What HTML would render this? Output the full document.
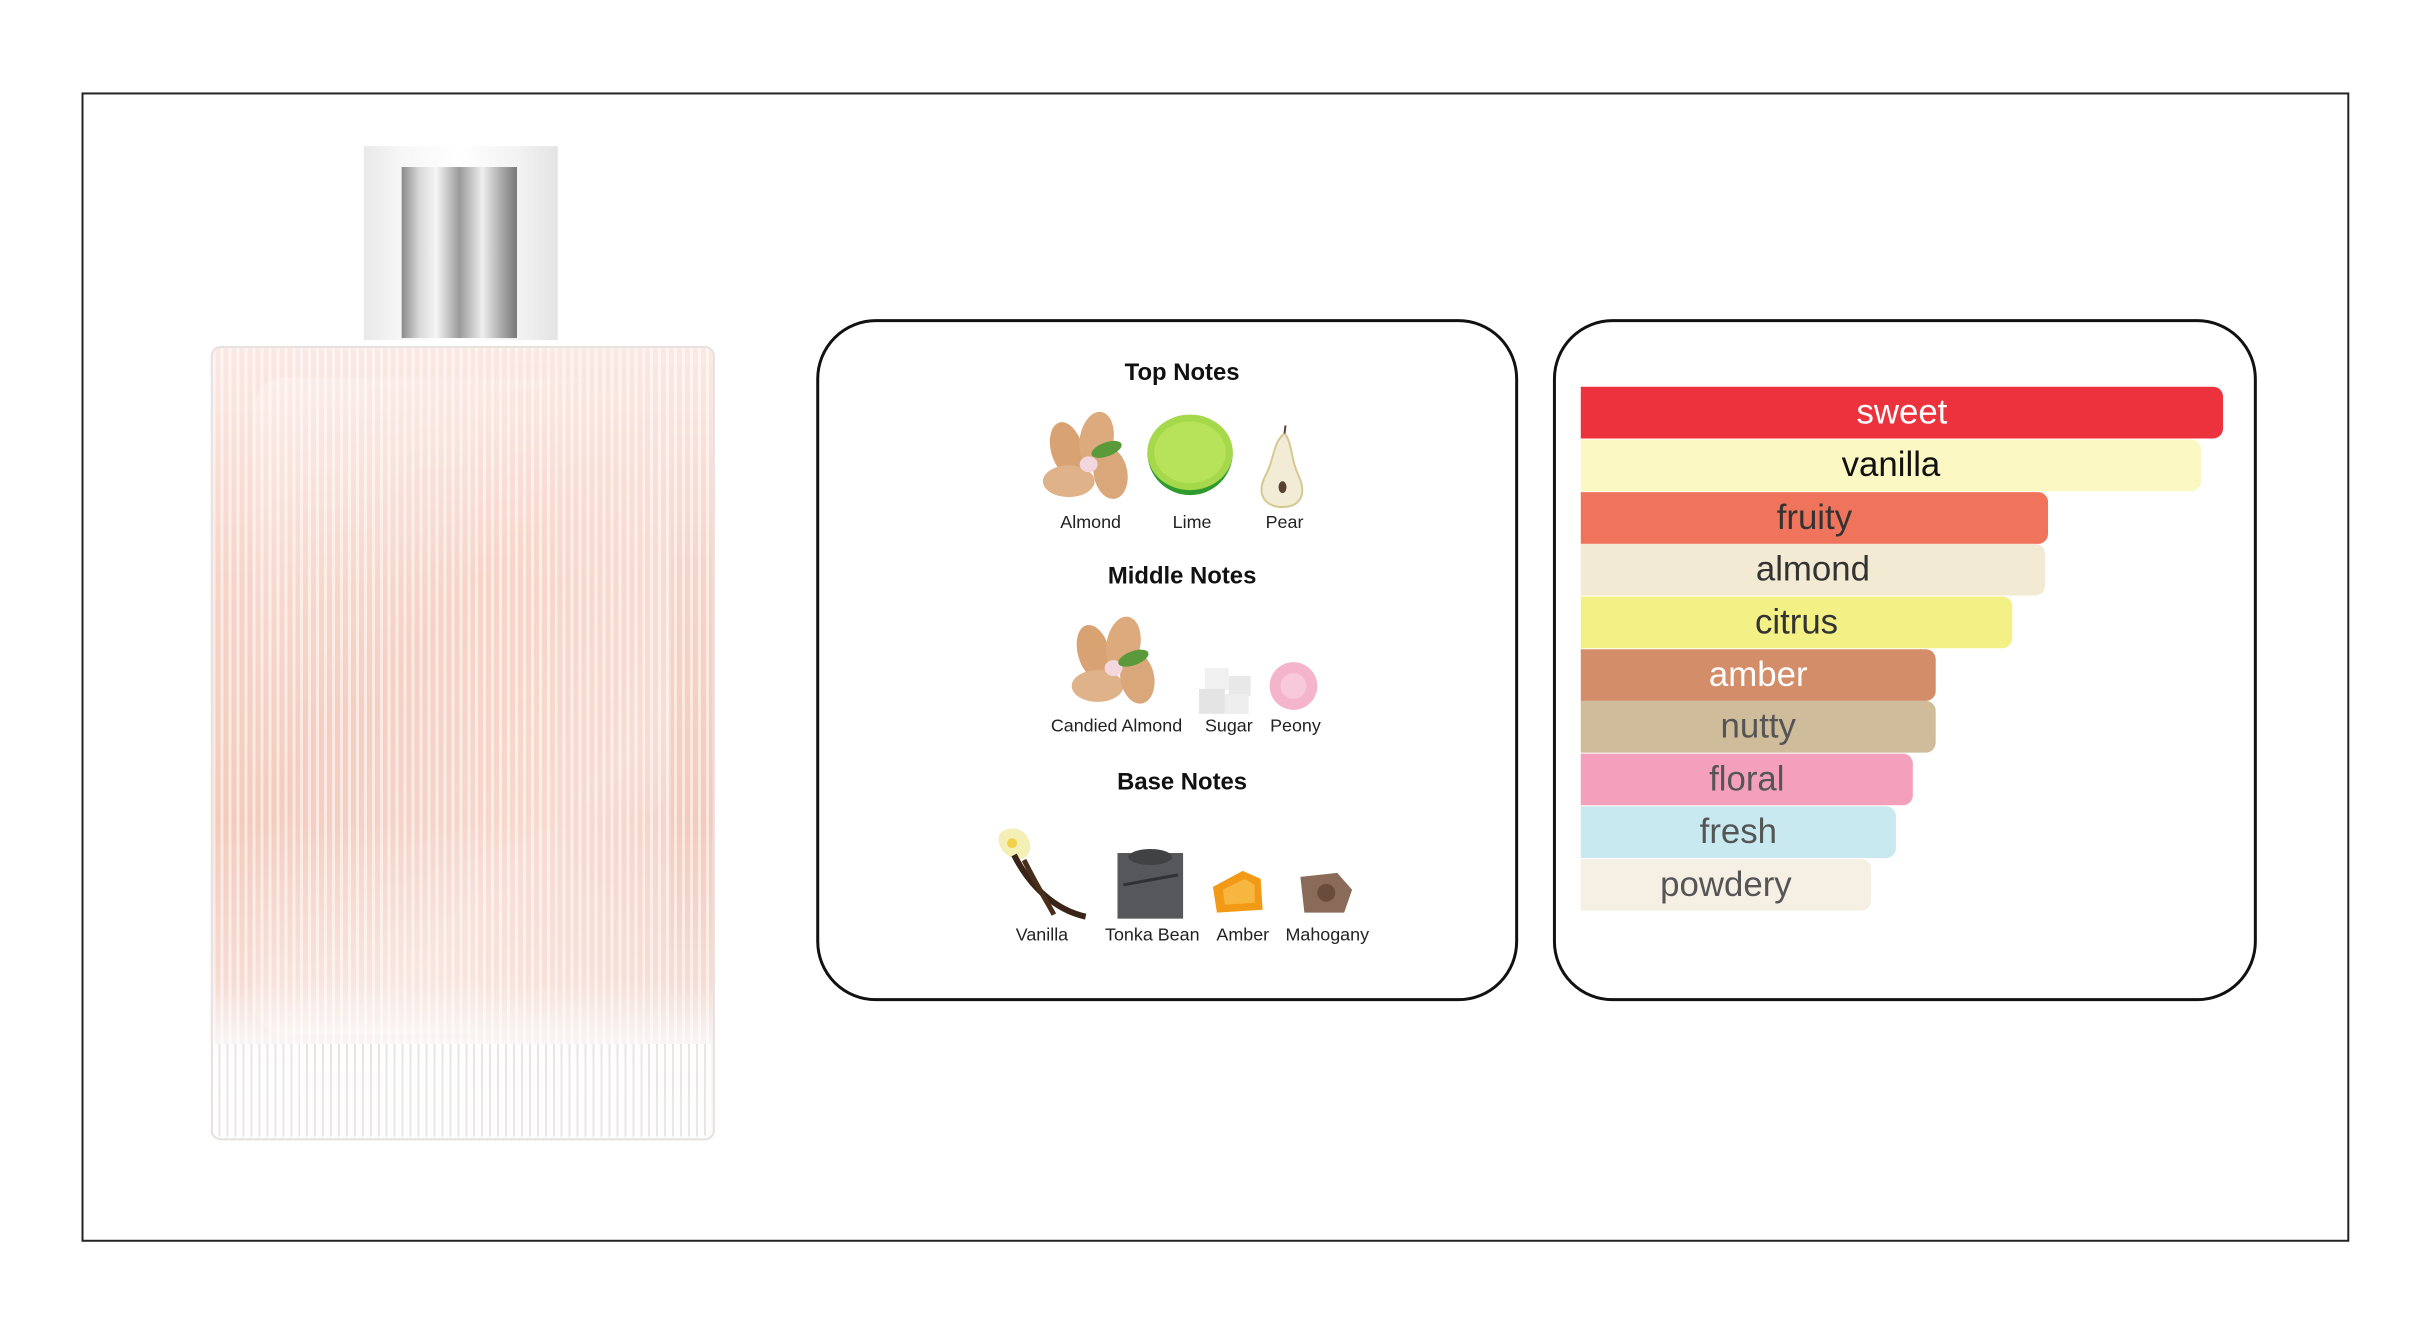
<!DOCTYPE html>
<html><head><meta charset="utf-8"><style>
html,body{margin:0;padding:0;background:#fff;}
body{width:2410px;height:1323px;position:relative;overflow:hidden;font-family:"Liberation Sans",sans-serif;}
#w{position:absolute;left:0;top:0;width:2410px;height:1323px;transform:scale(0.9942);transform-origin:0 0;}
.abs{position:absolute;}
.frame{left:82px;top:93px;width:2277px;height:1152px;border:2px solid #222;}
.panel{border:3px solid #111;border-radius:60px;background:#fff;}
.h{position:absolute;width:706px;text-align:center;font-weight:bold;font-size:24px;color:#111;left:15px;}
.lbl{position:absolute;font-size:18px;color:#222;transform:translateX(-50%);white-space:nowrap;}
.bar{position:absolute;left:1590px;height:52px;border-radius:0 10px 10px 0;text-align:center;font-size:35px;line-height:52px;}
</style></head><body><div id="w">
<div class="abs frame"></div>

<div class="abs" style="left:366px;top:147px;width:195px;height:195px;background:linear-gradient(90deg,#e9e9e9,#f7f7f7 20%,#fff 50%,#f2f2f2 80%,#e4e4e4);"></div>
<div class="abs" style="left:404px;top:168px;width:116px;height:172px;background:linear-gradient(90deg,#8a8a8a,#d8d8d8 15%,#f5f5f5 30%,#9a9a9a 50%,#eee 70%,#b0b0b0 85%,#777);"></div>
<div class="abs" style="left:212px;top:348px;width:503px;height:795px;border:2px solid #e6e0de;border-radius:10px;background:repeating-linear-gradient(90deg,rgba(255,255,255,0.55) 0 3px,rgba(255,255,255,0) 3px 8px),linear-gradient(180deg,#fbe9e4 0%,#f6d4c8 30%,#f3cbbd 60%,#f6dcd3 80%,#f8f5f4 88%,#fafafa 100%);"></div>
<div class="abs" style="left:255px;top:380px;width:420px;height:660px;border-radius:30px;background:linear-gradient(135deg,rgba(255,255,255,0.25),rgba(255,255,255,0) 40%,rgba(255,255,255,0.3) 70%,rgba(255,255,255,0));"></div>
<div class="abs" style="left:212px;top:1050px;width:503px;height:93px;background:repeating-linear-gradient(90deg,rgba(230,225,225,0.8) 0 2px,rgba(255,255,255,0.9) 2px 8px);border-radius:0 0 10px 10px;"></div>

<div class="abs panel" style="left:821px;top:321px;width:700px;height:680px;"></div>
<div class="abs" style="left:821px;top:0;width:706px;height:1323px;">
  <div class="h" style="top:361px;">Top Notes</div>
  <div class="h" style="top:566px;">Middle Notes</div>
  <div class="h" style="top:773px;">Base Notes</div>
</div>
<svg class="abs" style="left:0;top:0" width="2410" height="1323">
  <g transform="translate(1095,462)">
    <ellipse cx="-22" cy="-10" rx="16" ry="28" fill="#d8a273" transform="rotate(-15 -22 -10)"/>
    <ellipse cx="8" cy="-20" rx="17" ry="28" fill="#dcaa7c" transform="rotate(10 8 -20)"/>
    <ellipse cx="-20" cy="22" rx="26" ry="16" fill="#e0b28a"/>
    <ellipse cx="22" cy="14" rx="17" ry="26" fill="#d9a77a" transform="rotate(-10 22 14)"/>
    <ellipse cx="0" cy="5" rx="9" ry="8" fill="#f3d7df"/>
    <ellipse cx="18" cy="-10" rx="16" ry="7" fill="#5a9a3a" transform="rotate(-20 18 -10)"/>
  </g>
  <path d="M1154,455 A43,43 0 0 0 1240,455 Z" fill="#2f9a2e"/>
  <ellipse cx="1197" cy="455" rx="43" ry="38" fill="#a5d84a"/>
  <ellipse cx="1197" cy="455" rx="36" ry="31" fill="#b7e35a"/>
  <path d="M1292,436 C1280,445 1282,462 1273,478 C1262,500 1275,510 1290,510 C1305,510 1316,500 1306,478 C1298,462 1300,445 1292,436 Z" fill="#f2ecd6" stroke="#d5c890" stroke-width="2"/>
  <line x1="1292" y1="436" x2="1293" y2="428" stroke="#5a4030" stroke-width="2"/>
  <ellipse cx="1290" cy="490" rx="4" ry="6" fill="#5a4030"/>
  <g transform="translate(1122,668)">
    <ellipse cx="-22" cy="-12" rx="16" ry="28" fill="#d8a273" transform="rotate(-15 -22 -12)"/>
    <ellipse cx="8" cy="-20" rx="17" ry="28" fill="#dcaa7c" transform="rotate(10 8 -20)"/>
    <ellipse cx="-18" cy="22" rx="26" ry="16" fill="#e0b28a"/>
    <ellipse cx="22" cy="14" rx="17" ry="26" fill="#d9a77a" transform="rotate(-10 22 14)"/>
    <ellipse cx="-2" cy="4" rx="9" ry="8" fill="#f3d7df"/>
    <ellipse cx="18" cy="-6" rx="16" ry="7" fill="#5a9a3a" transform="rotate(-20 18 -6)"/>
  </g>
  <rect x="1212" y="672" width="24" height="22" fill="#f0f0f0"/>
  <rect x="1236" y="680" width="22" height="20" fill="#e8e8e8"/>
  <rect x="1206" y="693" width="26" height="25" fill="#e4e4e4"/>
  <rect x="1232" y="698" width="24" height="20" fill="#eeeeee"/>
  <circle cx="1301" cy="690" r="24" fill="#f4b5cc"/>
  <circle cx="1301" cy="690" r="13" fill="#f7c9da"/>
  <path d="M1006,838 C1016,830 1030,832 1035,845 C1040,858 1030,866 1022,864 C1012,862 1000,850 1006,838 Z" fill="#f3efb5"/>
  <circle cx="1018" cy="848" r="5" fill="#f2d24a"/>
  <path d="M1020,860 C1035,890 1060,915 1092,922" stroke="#3a2418" stroke-width="6" fill="none"/>
  <path d="M1030,865 C1045,895 1055,910 1060,920" stroke="#4a2e1c" stroke-width="5" fill="none"/>
  <rect x="1124" y="858" width="66" height="66" fill="#55575a"/>
  <ellipse cx="1157" cy="862" rx="22" ry="8" fill="#404244"/>
  <line x1="1130" y1="890" x2="1185" y2="880" stroke="#2f3133" stroke-width="3"/>
  <path d="M1220,892 L1250,876 L1268,884 L1270,915 L1224,918 Z" fill="#f29a16"/>
  <path d="M1230,895 L1252,884 L1262,890 L1262,908 L1232,910 Z" fill="#f7b640"/>
  <path d="M1308,882 L1345,878 L1360,895 L1352,918 L1312,918 Z" fill="#8a6a58"/>
  <circle cx="1334" cy="898" r="9" fill="#6a4c3c"/>
</svg>
<div class="abs" style="left:0;top:0;">
  <div class="lbl" style="left:1097px;top:515px;">Almond</div>
  <div class="lbl" style="left:1199px;top:515px;">Lime</div>
  <div class="lbl" style="left:1292px;top:515px;">Pear</div>
  <div class="lbl" style="left:1123px;top:720px;">Candied Almond</div>
  <div class="lbl" style="left:1236px;top:720px;">Sugar</div>
  <div class="lbl" style="left:1303px;top:720px;">Peony</div>
  <div class="lbl" style="left:1048px;top:930px;">Vanilla</div>
  <div class="lbl" style="left:1159px;top:930px;">Tonka Bean</div>
  <div class="lbl" style="left:1250px;top:930px;">Amber</div>
  <div class="lbl" style="left:1335px;top:930px;">Mahogany</div>
</div>

<div class="abs panel" style="left:1562px;top:321px;width:702px;height:680px;"></div>
<div class="bar" style="top:389px;width:646px;background:#ec323c;color:#fff;">sweet</div>
<div class="bar" style="top:442px;width:624px;background:#fbf8c3;color:#111;">vanilla</div>
<div class="bar" style="top:495px;width:470px;background:#f0735c;color:#333;">fruity</div>
<div class="bar" style="top:547px;width:467px;background:#f3ead4;color:#333;">almond</div>
<div class="bar" style="top:600px;width:434px;background:#f3f086;color:#333;">citrus</div>
<div class="bar" style="top:653px;width:357px;background:#d48d69;color:#fff;">amber</div>
<div class="bar" style="top:705px;width:357px;background:#cfbc9a;color:#555;">nutty</div>
<div class="bar" style="top:758px;width:334px;background:#f4a0bd;color:#555;">floral</div>
<div class="bar" style="top:811px;width:317px;background:#c7e9ef;color:#555;">fresh</div>
<div class="bar" style="top:864px;width:292px;background:#f5efe4;color:#555;">powdery</div>
</div></body></html>
